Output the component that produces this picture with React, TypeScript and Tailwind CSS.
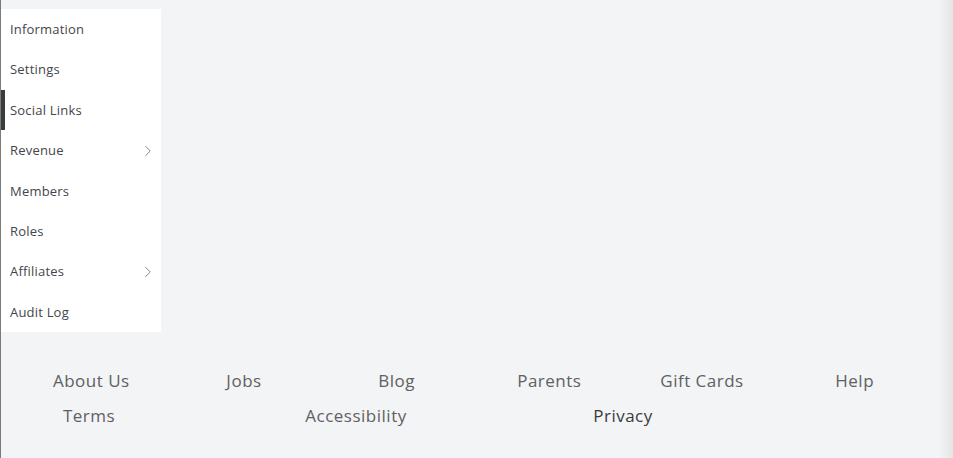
import { ChevronRight } from 'lucide-react';

const navItems = [
  { label: 'Information' },
  { label: 'Settings' },
  { label: 'Social Links', active: true },
  { label: 'Revenue', arrow: true },
  { label: 'Members' },
  { label: 'Roles' },
  { label: 'Affiliates', arrow: true },
  { label: 'Audit Log' },
];

const topLinks = ['About Us', 'Jobs', 'Blog', 'Parents', 'Gift Cards', 'Help'];

const App = () => {
  return (
    <div
      className="relative h-[458px] w-[953px] overflow-hidden border-l border-[#7b7b7b] bg-[#f2f4f5]"
      style={{ fontFamily: '"Open Sans", "Noto Sans", sans-serif' }}
    >
      {/* sidebar */}
      <div className="pt-[9px]">
        <ul className="w-[160px] bg-white">
          {navItems.map((item) => (
            <li
              key={item.label}
              className="relative flex h-[40.4px] items-center justify-between pl-[9px] pr-[4px] text-[13px] font-medium tracking-[0.2px] text-[#43464a]"
            >
              {item.active && <span className="absolute left-0 top-0 h-full w-[4px] bg-[#393b3d]" />}
              <span className="pt-px">{item.label}</span>
              {item.arrow && <ChevronRight size={18} strokeWidth={1.1} className="mt-px text-[#6b6d70]" />}
            </li>
          ))}
        </ul>
      </div>

      {/* footer */}
      <div className="mt-[37px] pl-[14px] pr-[22px] text-[17px] font-medium tracking-[0.5px] text-[#5f6063]">
        <div className="grid grid-cols-6">
          {topLinks.map((l) => (
            <div key={l} className="text-center leading-[24px]">
              {l}
            </div>
          ))}
        </div>
        <div className="mt-[11px] grid grid-cols-[148px_386px_148px]">
          <div className="text-center leading-[24px]">Terms</div>
          <div className="text-center leading-[24px]">Accessibility</div>
          <div className="text-center leading-[24px] text-[#393b3d]">Privacy</div>
        </div>
      </div>

      {/* right edge shade */}
      <div className="absolute right-0 top-0 h-full w-[14px] bg-gradient-to-r from-[#f2f4f5] to-[#e4e5e6]" />
    </div>
  );
};

export default App;
